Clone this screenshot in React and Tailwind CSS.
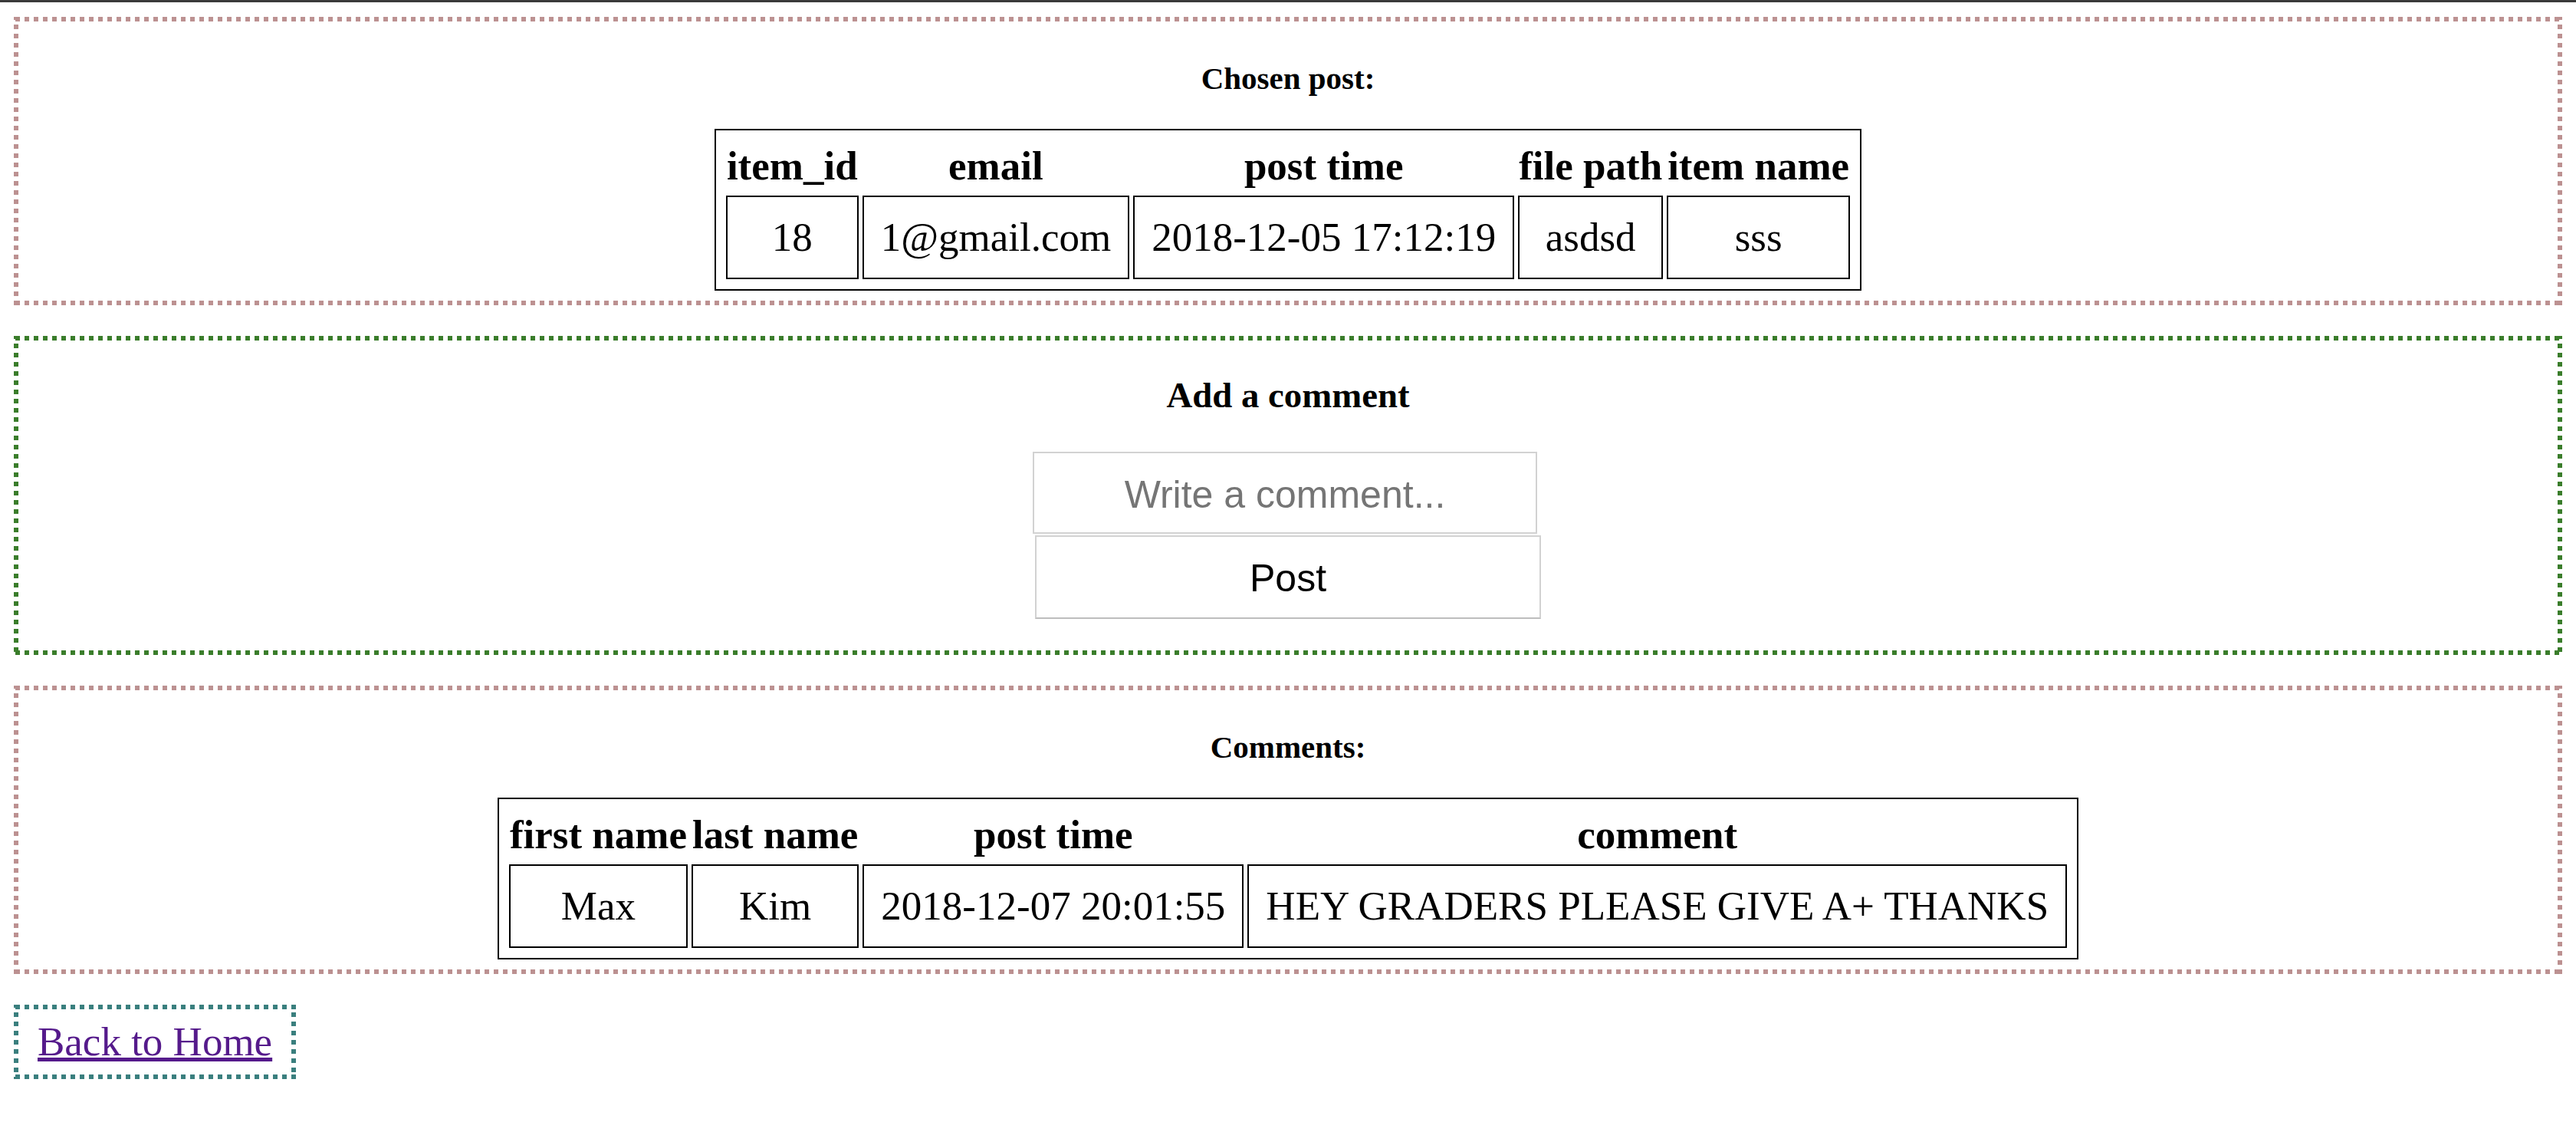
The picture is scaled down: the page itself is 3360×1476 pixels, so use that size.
import React from "react";

const roseBox =
  "[background-image:linear-gradient(90deg,#bc9191_50%,transparent_50%),linear-gradient(90deg,#bc9191_50%,transparent_50%),linear-gradient(180deg,#bc9191_50%,transparent_50%),linear-gradient(180deg,#bc9191_50%,transparent_50%)] [background-size:12px_6px,12px_6px,6px_12px,6px_12px] [background-position:2px_0,2px_100%,0_10px,100%_10px] [background-repeat:repeat-x,repeat-x,repeat-y,repeat-y]";

const greenBox =
  "[background-image:linear-gradient(90deg,#3a7d2b_50%,transparent_50%),linear-gradient(90deg,#3a7d2b_50%,transparent_50%),linear-gradient(180deg,#3a7d2b_50%,transparent_50%),linear-gradient(180deg,#3a7d2b_50%,transparent_50%)] [background-size:12px_6px,12px_6px,6px_12px,6px_12px] [background-position:2px_0,2px_100%,0_10px,100%_10px] [background-repeat:repeat-x,repeat-x,repeat-y,repeat-y]";

const tealBox =
  "[background-image:linear-gradient(90deg,#3a7f7e_50%,transparent_50%),linear-gradient(90deg,#3a7f7e_50%,transparent_50%),linear-gradient(180deg,#3a7f7e_50%,transparent_50%),linear-gradient(180deg,#3a7f7e_50%,transparent_50%)] [background-size:12px_6px,12px_6px,6px_12px,6px_12px] [background-position:2px_0,2px_100%,0_10px,100%_10px] [background-repeat:repeat-x,repeat-x,repeat-y,repeat-y]";

function DataTable({ headers, row }) {
  return (
    <table className="mt-[44px] mb-[13px] border-separate border-spacing-[5px] border-2 border-black p-[8px] text-[53px] leading-[61px]">
      <thead>
        <tr>
          {headers.map((h) => (
            <th
              key={h}
              className="px-[1px] py-[2px] text-center font-bold leading-[63px] whitespace-nowrap"
            >
              {h}
            </th>
          ))}
        </tr>
      </thead>
      <tbody>
        <tr>
          {row.map((c, i) => (
            <td
              key={i}
              className="border-2 border-black px-[22px] py-[22px] text-center whitespace-nowrap"
            >
              {c}
            </td>
          ))}
        </tr>
      </tbody>
    </table>
  );
}

export default function App() {
  return (
    <div className="min-h-screen bg-white text-black font-['Liberation_Serif',serif]">
      <div className="h-[3px] bg-[#3a3a3a]" />
      <div className="flex flex-col items-start gap-[40px] px-[18px] pt-[19px] pb-[20px]">
        <section className={"self-stretch p-[6px] " + roseBox}>
          <div className="flex flex-col items-center">
            <h4 className="mt-[52px] text-[41px] font-bold leading-[44px]">Chosen post:</h4>
            <DataTable
              headers={["item_id", "email", "post time", "file path", "item name"]}
              row={["18", "1@gmail.com", "2018-12-05 17:12:19", "asdsd", "sss"]}
            />
          </div>
        </section>

        <section className={"self-stretch p-[6px] " + greenBox}>
          <div className="flex flex-col items-center">
            <h3 className="mt-[44px] text-[46.8px] font-bold leading-[54px]">Add a comment</h3>
            <input
              type="text"
              placeholder="Write a comment..."
              className="mt-[47px] mr-[8px] h-[107px] w-[658px] border-2 border-[#d2d2d2] bg-white pt-[4px] text-center font-['Liberation_Sans',Arial,sans-serif] text-[50px] text-black outline-none placeholder:text-[#757575]"
            />
            <button
              type="button"
              className="mt-[2px] mb-[41px] h-[109px] w-[660px] border-2 border-[#d2d2d2] border-b-[#bdbdbd] bg-white pt-[4px] font-['Liberation_Sans',Arial,sans-serif] text-[50px] text-black"
            >
              Post
            </button>
          </div>
        </section>

        <section className={"self-stretch p-[6px] " + roseBox}>
          <div className="flex flex-col items-center">
            <h4 className="mt-[52px] text-[41px] font-bold leading-[44px]">Comments:</h4>
            <DataTable
              headers={["first name", "last name", "post time", "comment"]}
              row={["Max", "Kim", "2018-12-07 20:01:55", "HEY GRADERS PLEASE GIVE A+ THANKS"]}
            />
          </div>
        </section>

        <div className={"inline-block px-[31px] py-[18px] " + tealBox}>
          <a href="#" className="text-[53px] leading-[61px] text-[#551a8b] underline">
            Back to Home
          </a>
        </div>
      </div>
    </div>
  );
}
